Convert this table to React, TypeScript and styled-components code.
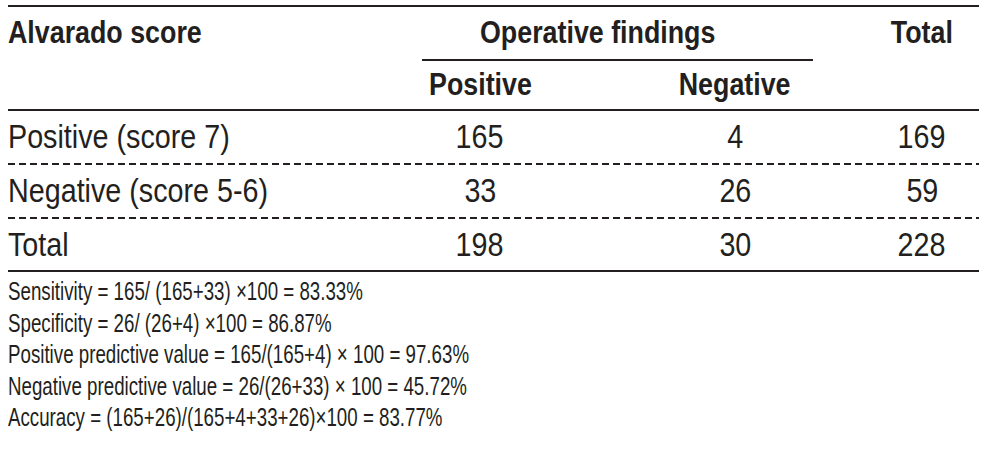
import React from 'react'
import styled, { createGlobalStyle } from 'styled-components'

const ink = '#231f20'

const GlobalStyle = createGlobalStyle`
  html, body {
    margin: 0;
    padding: 0;
    background: #fff;
  }
  body {
    font-family: 'Liberation Sans', Arial, sans-serif;
    color: ${ink};
  }
`

const rows = [
  { label: 'Positive (score 7)', pos: '165', neg: '4', total: '169' },
  { label: 'Negative (score 5-6)', pos: '33', neg: '26', total: '59' },
  { label: 'Total', pos: '198', neg: '30', total: '228', last: true },
]

const notes = [
  'Sensitivity = 165/ (165+33) ×100 = 83.33%',
  'Specificity = 26/ (26+4) ×100 = 86.87%',
  'Positive predictive value = 165/(165+4) × 100 = 97.63%',
  'Negative predictive value = 26/(26+33) × 100 = 45.72%',
  'Accuracy = (165+26)/(165+4+33+26)×100 = 83.77%',
]

const App = () => (
  <>
    <GlobalStyle />
    <Page>
      <Table>
        <HeadRow>
          <HeadCell><Narrow $bold>Alvarado score</Narrow></HeadCell>
          <SpanCell><Narrow $bold>Operative findings</Narrow></SpanCell>
          <HeadCell $col="total"><Narrow $bold $center>Total</Narrow></HeadCell>
        </HeadRow>
        <SubHeadRow>
          <HeadCell />
          <HeadCell $col="pos"><Narrow $bold $center>Positive</Narrow></HeadCell>
          <HeadCell $col="neg"><Narrow $bold $center>Negative</Narrow></HeadCell>
          <HeadCell />
        </SubHeadRow>
        {rows.map(r => (
          <BodyRow key={r.label} $last={r.last}>
            <Cell><Narrow>{r.label}</Narrow></Cell>
            <Cell $col="pos"><Narrow $center>{r.pos}</Narrow></Cell>
            <Cell $col="neg"><Narrow $center>{r.neg}</Narrow></Cell>
            <Cell $col="total"><Narrow $center>{r.total}</Narrow></Cell>
          </BodyRow>
        ))}
      </Table>
      <Notes>
        {notes.map(n => <Note key={n}>{n}</Note>)}
      </Notes>
    </Page>
  </>
)

const Page = styled.div`
  width: 992px;
  height: 457px;
  padding: 5px 13px 0 8px;
  box-sizing: border-box;
  overflow: hidden;
`

const Table = styled.div`
  border-top: 2px solid ${ink};
  border-bottom: 2px solid ${ink};
`

const Row = styled.div`
  display: grid;
  grid-template-columns: 414px 116px 275px 166px;
`

const HeadRow = styled(Row)`
  height: 54px;
  font-weight: 700;
  font-size: 31px;
`

const SubHeadRow = styled(Row)`
  height: 50px;
  font-weight: 700;
  font-size: 31px;
  border-bottom: 2px solid ${ink};
  box-sizing: border-box;
`

// condensed face stand-in: Arial metrics squeezed sideways
const Narrow = styled.span<{ $bold?: boolean; $center?: boolean }>`
  display: inline-block;
  transform: scaleX(${p => (p.$bold ? 0.865 : 0.87)});
  transform-origin: ${p => (p.$center ? 'center' : 'left')} center;
`

const colPad = { pos: 0, neg: 119, total: 52 }

const Cell = styled.div<{ $col?: 'pos' | 'neg' | 'total' }>`
  display: flex;
  align-items: center;
  justify-content: ${p => (p.$col ? 'center' : 'flex-start')};
  padding-left: ${p => (p.$col ? colPad[p.$col] : 0)}px;
  white-space: nowrap;
`

const HeadCell = styled(Cell)`
  padding-bottom: ${p => (p.$col === 'total' || !p.$col ? 2 : 0)}px;
`

const SpanCell = styled.div`
  grid-column: 2 / span 2;
  display: flex;
  align-items: center;
  padding-left: 58px;
  border-bottom: 2px solid ${ink};
  white-space: nowrap;
`

const BodyRow = styled(Row)<{ $last?: boolean }>`
  height: ${p => (p.$last ? 51 : 52)}px;
  font-size: 33px;
  background: ${p =>
    p.$last
      ? 'none'
      : `repeating-linear-gradient(to right, ${ink} 0 7px, transparent 7px 11px) left bottom / 100% 2px no-repeat`};
  padding-bottom: ${p => (p.$last ? 0 : 2)}px;
`

const Notes = styled.div`
  padding-top: 4px;
  font-size: 26px;
  line-height: 31.6px;
`

const Note = styled.div`
  white-space: nowrap;
  transform: scaleX(0.72);
  transform-origin: left center;
`

export default App
